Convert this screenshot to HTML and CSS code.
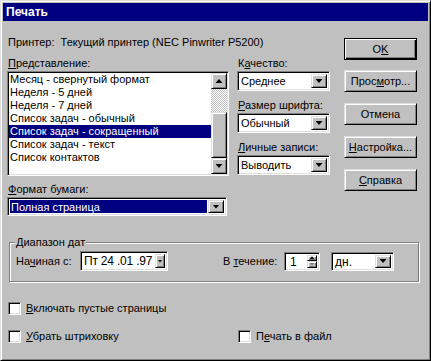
FILE: index.html
```html
<!DOCTYPE html>
<html lang="ru">
<head>
    <meta charset="UTF-8">
    <title>Печать</title>
    <link rel="stylesheet" href="styles.css">
</head>
<body>
    <div class="window">
        <div class="titlebar">Печать</div>
        <div class="dialog">
            <div class="top">
                <div class="main">
                    <div class="printer">Принтер:&nbsp; Текущий принтер (NEC Pinwriter P5200)</div>
                    <div class="views">
                        <div class="list-col">
                            <div class="label"><u>П</u>редставление:</div>
                            <div class="listbox">
                                <ul class="items">
                                    <li>Месяц - свернутый формат</li>
                                    <li>Неделя - 5 дней</li>
                                    <li>Неделя - 7 дней</li>
                                    <li>Список задач - обычный</li>
                                    <li class="selected">Список задач - сокращенный</li>
                                    <li>Список задач - текст</li>
                                    <li>Список контактов</li>
                                </ul>
                                <div class="scrollbar">
                                    <div class="sb-btn"><span class="arrow-up"></span></div>
                                    <div class="sb-track"></div>
                                    <div class="sb-thumb"></div>
                                    <div class="sb-btn"><span class="arrow-down"></span></div>
                                </div>
                            </div>
                        </div>
                        <div class="combo-col">
                            <div class="label">К<u>а</u>чество:</div>
                            <div class="combo">
                                <span class="combo-text">Среднее</span>
                                <span class="drop"><span class="arrow-down"></span></span>
                            </div>
                            <div class="label spaced"><u>Р</u>азмер шрифта:</div>
                            <div class="combo">
                                <span class="combo-text">Обычный</span>
                                <span class="drop"><span class="arrow-down"></span></span>
                            </div>
                            <div class="label spaced"><u>Л</u>ичные записи:</div>
                            <div class="combo">
                                <span class="combo-text">Выводить</span>
                                <span class="drop"><span class="arrow-down"></span></span>
                            </div>
                        </div>
                    </div>
                    <div class="paper">
                        <div class="label"><u>Ф</u>ормат бумаги:</div>
                        <div class="combo wide">
                            <span class="combo-text"><span class="highlight">Полная страница</span></span>
                            <span class="drop"><span class="arrow-down"></span></span>
                        </div>
                    </div>
                </div>
                <div class="buttons">
                    <button class="btn default">O<u>K</u></button>
                    <button class="btn first">Прос<u>м</u>отр...</button>
                    <button class="btn">Отмена</button>
                    <button class="btn"><u>Н</u>астройка...</button>
                    <button class="btn"><u>С</u>правка</button>
                </div>
            </div>

            <div class="group">
                <span class="group-title">Диапазон дат</span>
                <div class="group-row">
                    <span class="start-label">На<u>ч</u>иная с:</span>
                    <div class="field date">
                        <span class="field-text">Пт 24 .01 .97</span>
                        <span class="small-drop"><span class="arrow-down"></span></span>
                    </div>
                    <span class="during-label">В <u>т</u>ечение:</span>
                    <div class="field spin">
                        <span class="field-text">1</span>
                        <span class="spin-btns">
                            <span class="spin-btn"><span class="arrow-up small"></span></span>
                            <span class="spin-btn"><span class="arrow-down small disabled"></span></span>
                        </span>
                    </div>
                    <div class="combo units">
                        <span class="combo-text">дн.</span>
                        <span class="drop"><span class="arrow-down"></span></span>
                    </div>
                </div>
            </div>

            <div class="checks">
                <div class="check-row">
                    <label class="check"><span class="box"></span><span><u>В</u>ключать пустые страницы</span></label>
                </div>
                <div class="check-row second">
                    <label class="check half"><span class="box"></span><span><u>У</u>брать штриховку</span></label>
                    <label class="check"><span class="box"></span><span>П<u>е</u>чать в файл</span></label>
                </div>
            </div>
        </div>
    </div>
</body>
</html>
```

FILE: styles.css
```css
html, body {
    margin: 0;
    padding: 0;
}
body {
    font-family: "Liberation Sans", Arial, sans-serif;
    font-size: 11px;
    line-height: 13px;
    color: #000;
    background: #c0c0c0;
}
u {
    text-decoration: underline;
    text-underline-offset: 1px;
}
.window {
    width: 431px;
    height: 361px;
    box-sizing: border-box;
    background: #c0c0c0;
    border: 1px solid;
    border-color: #dfdfdf #000 #000 #dfdfdf;
    box-shadow: inset 1px 1px #fff, inset -1px -1px #808080;
    padding: 2px;
}
.titlebar {
    height: 18px;
    line-height: 18px;
    background: #000080;
    color: #fff;
    font-weight: bold;
    font-size: 12px;
    padding-left: 3px;
}
.dialog {
    padding-left: 4px;
}
.top {
    display: flex;
}
.main {
    width: 323px;
}
.printer {
    margin-top: 15px;
    padding-left: 1px;
}
.views {
    display: flex;
    margin-top: 8px;
}
.label {
    padding-left: 1px;
    height: 13px;
    margin-bottom: 1px;
}
.label.spaced {
    margin-top: 8px;
}
.list-col {
    width: 222px;
}

/* sunken 3d field */
.listbox, .combo, .field, .box {
    box-sizing: border-box;
    background: #fff;
    border: 1px solid;
    border-color: #808080 #fff #fff #808080;
    box-shadow: inset 1px 1px #000, inset -1px -1px #dfdfdf;
}
/* raised 3d button */
.drop, .sb-btn, .sb-thumb, .btn, .small-drop, .spin-btn {
    box-sizing: border-box;
    background: #c0c0c0;
    border: 1px solid;
    border-color: #dfdfdf #000 #000 #dfdfdf;
    box-shadow: inset 1px 1px #fff, inset -1px -1px #808080;
}

.listbox {
    height: 105px;
    display: flex;
    padding: 1px;
}
.items {
    list-style: none;
    margin: 0;
    padding: 0;
    flex: 1;
    overflow: hidden;
}
.items li {
    height: 13px;
    padding-left: 1px;
    white-space: nowrap;
}
.items li.selected {
    background: #000080;
    color: #fff;
}
.scrollbar {
    width: 16px;
    display: flex;
    flex-direction: column;
}
.sb-btn {
    height: 16px;
    display: flex;
    align-items: center;
    justify-content: center;
}
.sb-track {
    height: 23px;
    background: repeating-conic-gradient(#fff 0 25%, #c0c0c0 0 50%) 0 0 / 2px 2px;
}
.sb-thumb {
    flex: 1;
}
.arrow-down, .arrow-up {
    display: block;
    width: 7px;
    height: 4px;
    background: #000;
}
.arrow-down {
    clip-path: polygon(0 0, 100% 0, 50% 100%);
}
.arrow-up {
    clip-path: polygon(50% 0, 100% 100%, 0 100%);
}
.arrow-down.small, .arrow-up.small {
    width: 5px;
    height: 3px;
}
.arrow-down.disabled {
    background: #808080;
}

.combo-col {
    margin-left: 8px;
    width: 93px;
}
.combo {
    height: 20px;
    display: flex;
    padding: 2px;
}
.combo-text {
    flex: 1;
    padding-left: 1px;
    line-height: 14px;
    white-space: nowrap;
    overflow: hidden;
}
.drop {
    width: 16px;
    display: flex;
    align-items: center;
    justify-content: center;
}
.paper {
    margin-top: 7px;
}
.combo.wide {
    width: 220px;
    height: 19px;
}
.highlight {
    display: block;
    background: #000080;
    color: #fff;
    padding-left: 1px;
    margin-left: -1px;
    margin-right: 1px;
}

.buttons {
    margin-left: 14px;
    width: 73px;
    display: flex;
    flex-direction: column;
}
.btn {
    height: 22px;
    margin-top: 11px;
    padding: 0;
    font: inherit;
    color: #000;
}
.btn.default {
    margin-top: 17px;
    border-color: #000;
    box-shadow: inset 1px 1px #fff, inset -1px -1px #000, inset -2px -2px #808080;
}
.btn.first {
    margin-top: 10px;
}

.group {
    position: relative;
    margin: 26px 0 0 2px;
    width: 410px;
    height: 40px;
    box-sizing: border-box;
    border: 1px solid #808080;
    box-shadow: inset 1px 1px #fff, 1px 1px #fff;
}
.group-title {
    position: absolute;
    top: -7px;
    left: 5px;
    padding: 0 1px;
    background: #c0c0c0;
}
.group-row {
    display: flex;
    align-items: center;
    height: 20px;
    margin-top: 8px;
    padding-left: 6px;
}
.start-label {
    width: 64px;
}
.field {
    display: flex;
    padding: 2px;
}
.field-text {
    flex: 1;
    padding-left: 2px;
    line-height: 15px;
    font-size: 12px;
    white-space: nowrap;
    overflow: hidden;
}
.date {
    width: 88px;
    height: 20px;
}
.date .field-text {
    padding-left: 1px;
    letter-spacing: -0.2px;
}
.small-drop {
    width: 10px;
    display: flex;
    align-items: center;
    justify-content: center;
}
.small-drop .arrow-down {
    width: 5px;
    height: 3px;
}
.during-label {
    margin-left: 55px;
    width: 61px;
}
.spin {
    width: 36px;
    height: 19px;
}
.spin .field-text {
    padding-left: 3px;
}
.spin-btns {
    width: 10px;
    display: flex;
    flex-direction: column;
}
.spin-btn {
    flex: 1;
    display: flex;
    align-items: center;
    justify-content: center;
}
.combo.units {
    margin-left: 11px;
    width: 63px;
    height: 19px;
}
.units .combo-text {
    font-size: 12px;
}

.checks {
    padding-left: 1px;
    margin-top: 20px;
}
.check-row {
    display: flex;
}
.check-row.second {
    margin-top: 15px;
}
.check {
    display: flex;
    align-items: center;
}
.check.half {
    width: 230px;
}
.box {
    width: 13px;
    height: 13px;
    margin-right: 5px;
}
```
